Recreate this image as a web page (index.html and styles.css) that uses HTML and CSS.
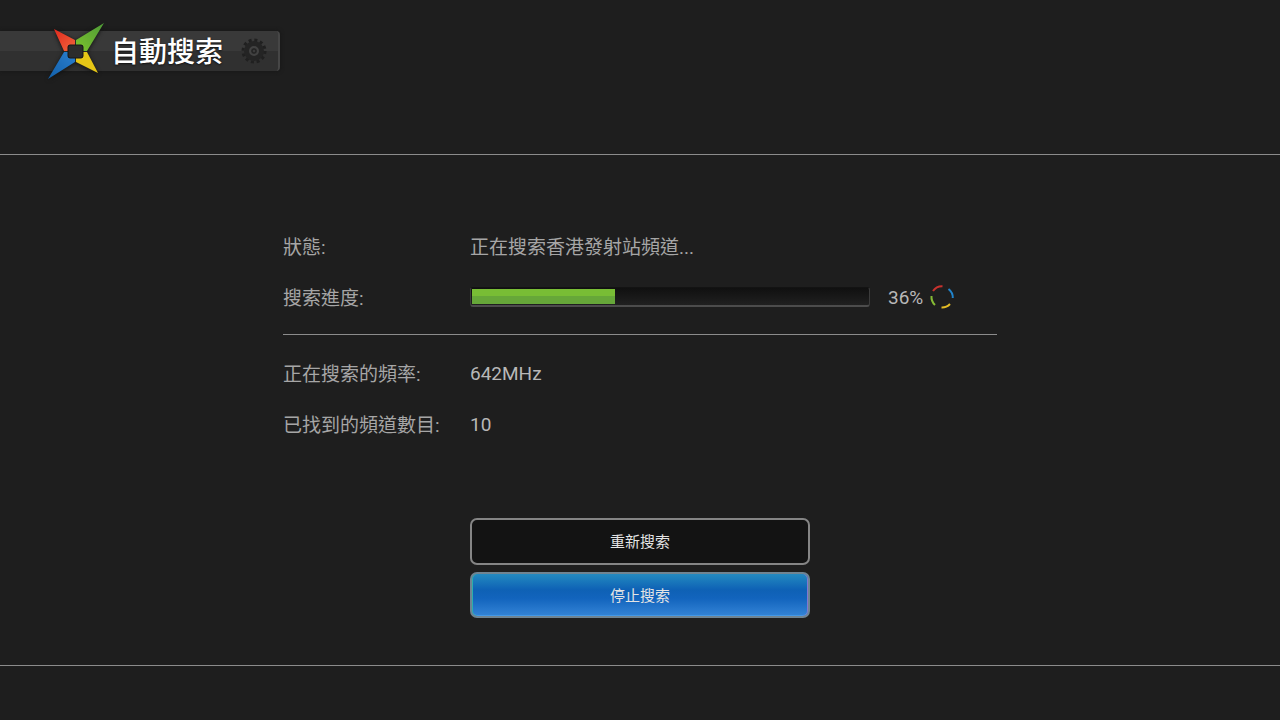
FILE: index.html
```html
<!DOCTYPE html>
<html lang="zh-Hant">
<head>
<meta charset="utf-8">
<meta name="viewport" content="width=device-width, initial-scale=1">
<title>自動搜索</title>
<link rel="stylesheet" href="styles.css">
</head>
<body class="screen">
<header class="header">
  <div class="banner">
    <svg class="logo" viewBox="0 0 60 60" aria-hidden="true">
      <defs>
        <linearGradient id="red" x1="0" y1="0" x2="1" y2="1"><stop offset="0" stop-color="#e02a1e"/><stop offset="1" stop-color="#f0643c"/></linearGradient>
        <linearGradient id="green" x1="0" y1="1" x2="1" y2="0"><stop offset="0" stop-color="#7cc32c"/><stop offset="1" stop-color="#4e9a38"/></linearGradient>
        <linearGradient id="blue" x1="0" y1="1" x2="1" y2="0"><stop offset="0" stop-color="#125fa8"/><stop offset="1" stop-color="#2a7fd0"/></linearGradient>
      </defs>
      <path d="M8 8 29 19V24H24Q22 24 22 26V30H18Z" fill="url(#red)"/>
      <path d="M58 2 41 30H37V26Q37 24 35 24H30V19Z" fill="url(#green)"/>
      <path d="M2 58 18 31H22V35Q22 37 24 37H29V41Z" fill="url(#blue)"/>
      <path d="M52 52 30 41V37H35Q37 37 37 35V31H41Z" fill="#e6c616"/>
      <path d="M29.500 19V24M18 30.500H22M37 30.500H41M29.500 37V41" stroke="#252a25" stroke-width="1"/>
      <rect x="22" y="24" width="15" height="13" rx="2" fill="#2c2c2c" stroke="#161616"/>
    </svg>
    <h1 class="title">自動搜索</h1>
    <svg class="gear" viewBox="0 0 26 26" aria-hidden="true">
      <circle cx="13" cy="13" r="11" fill="none" stroke="#202020" stroke-width="3" stroke-dasharray="3 2.760"/>
      <circle cx="13" cy="13" r="7" fill="none" stroke="#242424" stroke-width="6"/>
      <circle cx="13" cy="13" r="4" fill="#303030" stroke="#424242" stroke-width="2"/>
      <circle cx="13" cy="13" r="2" fill="#3b3b3b" stroke="#1e1e1e"/>
    </svg>
  </div>
</header>
<main class="main">
  <section class="panel">
    <dl class="rows">
      <div class="row"><dt class="label">狀態:</dt><dd class="value status">正在搜索香港發射站頻道...</dd></div>
      <div class="row">
        <dt class="label" id="progress-label">搜索進度:</dt>
        <dd class="value">
          <progress class="bar" max="100" value="36" aria-labelledby="progress-label">36%</progress>
          <span class="percent">36%</span>
          <svg class="spinner" viewBox="0 0 24 24" aria-hidden="true">
            <g fill="none" stroke-width="2">
              <path d="M3 6A11 11 0 0 1 12.500 1.200" stroke="#c8322e"/>
              <path d="M18.500 4A11 11 0 0 1 22.800 13" stroke="#2084cc"/>
              <path d="M20 19A11 11 0 0 1 11.500 22.500" stroke="#e3bb25"/>
              <path d="M5 20A11 11 0 0 1 1.500 11" stroke="#86ba35"/>
            </g>
          </svg>
        </dd>
      </div>
    </dl>
    <hr class="divider">
    <dl class="rows">
      <div class="row"><dt class="label">正在搜索的頻率:</dt><dd class="value">642MHz</dd></div>
      <div class="row"><dt class="label">已找到的頻道數目:</dt><dd class="value">10</dd></div>
    </dl>
  </section>
  <div class="actions">
    <button class="button" type="button">重新搜索</button>
    <button class="button button-active" type="button">停止搜索</button>
  </div>
</main>
<footer class="footer"></footer>
</body>
</html>
```
FILE: styles.css
```css
* {
  box-sizing: border-box;
}

.screen {
  display: flex;
  flex-direction: column;
  min-height: 100vh;
  margin: 0;
  background: #1e1e1e;
  color: #b8b8b8;
  font-family: Roboto, "Noto Sans CJK TC", sans-serif;
  font-size: 19px;
  font-weight: 400;
}

.header {
  height: 155px;
  padding-top: 31px;
  border-bottom: 1px solid #8c8c8c;
}

.banner {
  display: flex;
  align-items: center;
  width: 280px;
  height: 40px;
  padding-left: 46px;
  border-right: 2px solid #464646;
  border-radius: 0 4px 4px 0;
  background: linear-gradient(#393939 0 50%, #303030 50% 100%);
  box-shadow: 0 0 4px #161616;
}

.logo {
  flex: none;
  width: 60px;
  height: 60px;
  filter: drop-shadow(0 1px 2px #111);
}

.title {
  margin: 0 0 0 5px;
  padding-top: 4px;
  color: #fff;
  font-size: 28px;
  font-weight: 500;
  line-height: 40px;
  white-space: nowrap;
  text-shadow: 0 1px 2px #111;
}

.gear {
  flex: none;
  width: 26px;
  height: 26px;
  margin-left: 18px;
}

.main {
  display: flex;
  flex: 1;
  flex-direction: column;
  align-items: center;
  padding: 66px 24px 24px;
}

.panel {
  width: 100%;
  max-width: 714px;
}

.rows {
  margin: 0;
}

.row {
  display: grid;
  grid-template-columns: 187px 1fr;
  align-items: center;
  min-height: 51px;
  line-height: 28px;
}

.label {
  padding-top: 2px;
  color: #a6a6a6;
  white-space: nowrap;
}

.value {
  display: flex;
  align-items: center;
  margin: 0;
}

.status {
  padding-top: 2px;
  color: #a6a6a6;
}

.bar {
  width: 400px;
  height: 20px;
  margin-bottom: 1px;
  padding: 1px;
  border: 1px solid #131313;
  border-color: #131313 #3c3c3c #4c4c4c #3c3c3c;
  border-width: 1px 1px 2px;
  border-radius: 3px;
  background: linear-gradient(#101010, #202020);
  appearance: none;
}

.bar::-webkit-progress-bar {
  background: transparent;
}

.bar::-webkit-progress-value {
  background: linear-gradient(#78bd35 0 50%, #66a739 50% 100%);
}

.percent {
  width: 42px;
  margin-left: 18px;
}

.spinner {
  width: 24px;
  height: 24px;
  margin-bottom: 1px;
}

.divider {
  height: 1px;
  margin: 11px 0 13px;
  border: 0;
  background: #8c8c8c;
}

.actions {
  display: grid;
  gap: 7px;
  width: 100%;
  max-width: 340px;
  margin-top: 68px;
}

.button {
  height: 47px;
  padding: 0 0 2px;
  border: 2px solid #858585;
  border-radius: 7px;
  background: #131313;
  color: #e4e4e4;
  font-family: inherit;
  font-size: 15px;
  font-weight: 400;
}

.button-active {
  height: 46px;
  border-color: #6f8492;
  background: linear-gradient(#238ac0 0%, #0e61b5 38%, #1264bd 58%, #3484d6 100%);
  box-shadow: inset 1px 0 #2dafaa, inset -1px 0 #8177d2, inset 0 -1px #4298e8;
}

.footer {
  height: 55px;
  border-top: 1px solid #8c8c8c;
}
```
